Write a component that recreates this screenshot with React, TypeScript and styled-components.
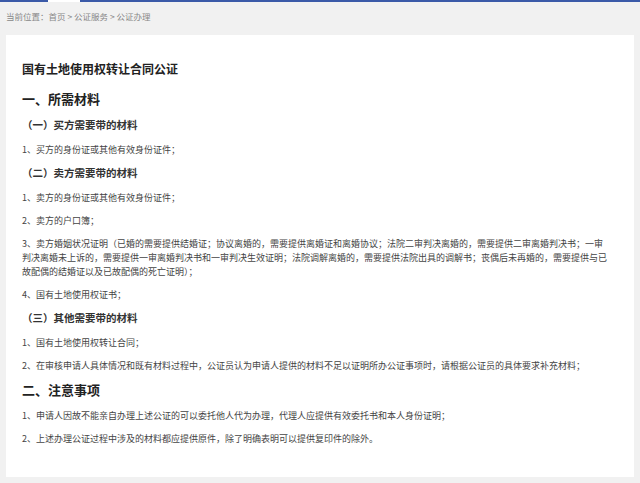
import React from "react";
import styled, { createGlobalStyle } from "styled-components";

const G = createGlobalStyle`
  body { margin: 0; background: #f1f1f1; font-family: "Noto Sans CJK SC", "Noto Sans", sans-serif; }
`;
const TopBar = styled.div`
  height: 2px; background: #3b5aa8; position: relative;
  &::after { content: ""; position: absolute; left: 48px; width: 32px; top: 0; height: 2px; background: #fff; }
`;
const Crumb = styled.div`
  font-size: 8.5px; color: #888; padding: 8px 0 0 6px; height: 25px; box-sizing: border-box;
`;
const Card = styled.div`
  margin: 8px 6px 6px 6px; background: #fff; padding: 26px 16px 38px 16px; height: 442px; box-sizing: border-box;
`;
const Title = styled.div`
  font-size: 12px; font-weight: 700; color: #222; line-height: 16px; margin-bottom: 14px;
`;
const H2 = styled.div<{ $top?: number }>`
  font-size: 13px; font-weight: 700; color: #222; line-height: 16px; margin: ${p => p.$top ?? 0}px 0 11px;
`;
const H3 = styled.div`
  font-size: 10.5px; font-weight: 700; color: #333; line-height: 14px; margin: 0 0 11px 0;
`;
const P = styled.div`
  font-size: 9px; color: #444; line-height: 14px; margin-bottom: 9px; padding-right: 8px;
`;

export default function App() {
  return (
    <>
      <G />
      <TopBar />
      <Crumb>当前位置：首页 &gt; 公证服务 &gt; 公证办理</Crumb>
      <Card>
        <Title>国有土地使用权转让合同公证</Title>
        <H2>一、所需材料</H2>
        <H3>（一）买方需要带的材料</H3>
        <P>1、买方的身份证或其他有效身份证件；</P>
        <H3>（二）卖方需要带的材料</H3>
        <P>1、卖方的身份证或其他有效身份证件；</P>
        <P>2、卖方的户口簿；</P>
        <P>3、卖方婚姻状况证明（已婚的需要提供结婚证；协议离婚的，需要提供离婚证和离婚协议；法院二审判决离婚的，需要提供二审离婚判决书；一审判决离婚未上诉的，需要提供一审离婚判决书和一审判决生效证明；法院调解离婚的，需要提供法院出具的调解书；丧偶后未再婚的，需要提供与已故配偶的结婚证以及已故配偶的死亡证明）；</P>
        <P>4、国有土地使用权证书；</P>
        <H3>（三）其他需要带的材料</H3>
        <P>1、国有土地使用权转让合同；</P>
        <P>2、在审核申请人具体情况和既有材料过程中，公证员认为申请人提供的材料不足以证明所办公证事项时，请根据公证员的具体要求补充材料；</P>
        <H2 $top={4}>二、注意事项</H2>
        <P>1、申请人因故不能亲自办理上述公证的可以委托他人代为办理，代理人应提供有效委托书和本人身份证明；</P>
        <P>2、上述办理公证过程中涉及的材料都应提供原件，除了明确表明可以提供复印件的除外。</P>
      </Card>
    </>
  );
}
